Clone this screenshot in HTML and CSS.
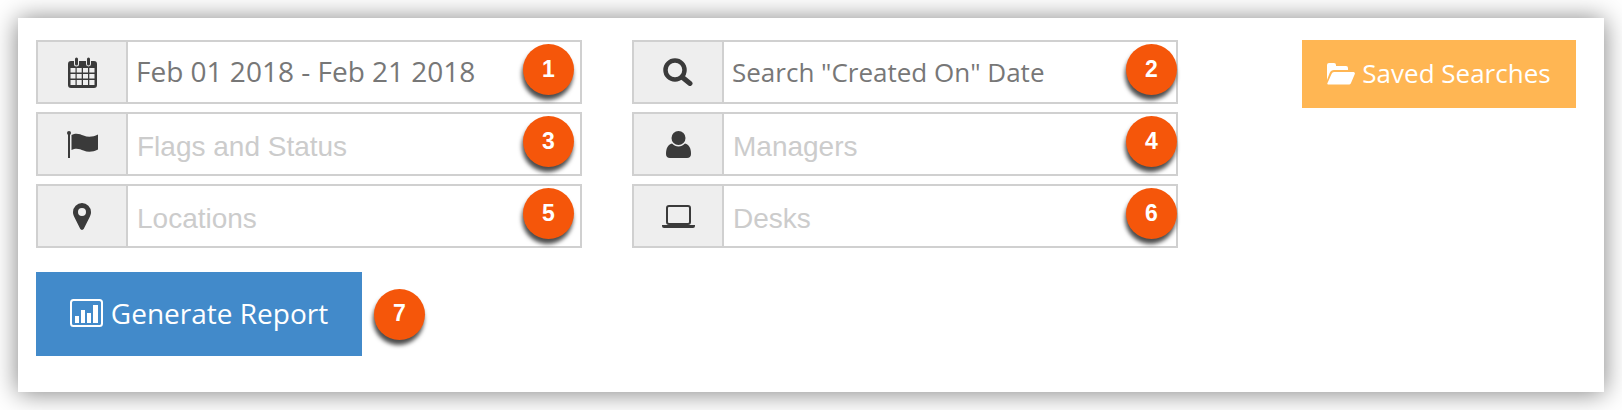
FILE: index.html
```html
<!DOCTYPE html>
<html lang="en">
<head>
<meta charset="utf-8">
<title>Report filters</title>
<link rel="stylesheet" href="styles.css">
</head>
<body>
<main class="card">
  <div class="top">
    <div class="col">
      <div class="field">
        <span class="addon"><svg class="ic" width="29" height="31" viewBox="0 0 29 31"><path fill="#3a3a3a" d="M3 4h3v3a2.5 2.5 0 0 0 5 0V4h7v3a2.5 2.5 0 0 0 5 0V4h3a3 3 0 0 1 3 3v21a3 3 0 0 1-3 3H3a3 3 0 0 1-3-3V7a3 3 0 0 1 3-3z"/><path fill="#3a3a3a" d="M7 2a1.500 1.500 0 0 1 3 0v5a1.500 1.500 0 0 1-3 0zM19 2a1.500 1.500 0 0 1 3 0v5a1.500 1.500 0 0 1-3 0z"/><path fill="#eee" d="M2.500 11h5v4.500h-5zM8.700 11h5v4.500h-5zM15 11h5v4.500h-5zM21.300 11h5.200v4.500h-5.200zM2.500 17h5v4.500h-5zM8.700 17h5v4.500h-5zM15 17h5v4.500h-5zM21.300 17h5.200v4.500h-5.200zM2.500 23h5v5h-5zM8.700 23h5v5h-5zM15 23h5v5h-5zM21.300 23h5.200v5h-5.200z"/></svg></span>
        <span class="value value-date">Feb 01 2018 - Feb 21 2018</span>
        <span class="badge">1</span>
      </div>
      <div class="field">
        <span class="addon"><svg class="ic" width="31" height="27" viewBox="0 0 31 27"><path fill="#3a3a3a" d="M1 3h2v24H1z"/><circle cx="2" cy="2" r="2" fill="#3a3a3a"/><path fill="#3a3a3a" d="M4.500 4C9 1.500 13 3 16.500 4.500 21 6.500 26 6 31 3.500v15c-5 2.500-10 3-14.500 1C13 18 9 16.500 4.500 19z"/></svg></span>
        <span class="placeholder">Flags and Status</span>
        <span class="badge">3</span>
      </div>
      <div class="field">
        <span class="addon"><svg class="ic" width="18" height="27" viewBox="0 0 18 27"><path fill="#3a3a3a" fill-rule="evenodd" d="M9 0a9 9 0 0 1 9 9c0 2-.5 3.300-1.300 5L10.800 25.800a2 2 0 0 1-3.600 0L1.300 14C.5 12.300 0 11 0 9a9 9 0 0 1 9-9zm0 5a4 4 0 1 0 0 8 4 4 0 0 0 0-8z"/></svg></span>
        <span class="placeholder">Locations</span>
        <span class="badge">5</span>
      </div>
    </div>
    <div class="col">
      <div class="field">
        <span class="addon"><svg class="ic" width="30" height="28" viewBox="0 0 30 28"><circle cx="12" cy="12" r="9.500" fill="none" stroke="#3a3a3a" stroke-width="4.500"/><path stroke="#3a3a3a" stroke-width="5" stroke-linecap="round" fill="none" d="M19 19l8 6.500"/></svg></span>
        <span class="value">Search "Created On" Date</span>
        <span class="badge">2</span>
      </div>
      <div class="field">
        <span class="addon"><svg class="ic" width="25" height="27" viewBox="0 0 25 27"><circle cx="12.500" cy="7" r="7" fill="#3a3a3a"/><path fill="#3a3a3a" d="M0 23c0-6 2-9.500 6-10.500 2 2 4 3 6.500 3s4.500-1 6.500-3c4 1 6 4.500 6 10.500 0 2.500-1.500 4-4 4H4c-2.500 0-4-1.500-4-4z"/></svg></span>
        <span class="placeholder">Managers</span>
        <span class="badge">4</span>
      </div>
      <div class="field">
        <span class="addon"><svg class="ic" width="33" height="23" viewBox="0 0 33 23"><rect x="5" y="1" width="23" height="18" rx="2" fill="none" stroke="#3a3a3a" stroke-width="2"/><path fill="#3a3a3a" d="M0 20h33v1a2 2 0 0 1-2 2H2a2 2 0 0 1-2-2z"/></svg></span>
        <span class="placeholder">Desks</span>
        <span class="badge">6</span>
      </div>
    </div>
    <button class="btn btn-saved" type="button"><svg width="28" height="23" viewBox="0 0 28 23"><path fill="#fff" d="M0 3a2 2 0 0 1 2-2h5a2 2 0 0 1 2 2v1h10a2 2 0 0 1 2 2v2H7c-2 0-3.500 1-4.300 3L0 18z"/><path fill="#fff" d="M7 10h19c1.500 0 2.300 1 1.700 2.300L24 21c-.5 1-1.300 1.500-2.500 1.500H1.500C.5 22.500 0 22 .5 21L4.500 12C5 10.700 6 10 7 10z"/></svg>Saved Searches</button>
  </div>
  <div class="bottom">
    <button class="btn btn-report" type="button"><svg width="33" height="28" viewBox="0 0 33 28"><rect x="1" y="1" width="31" height="26" rx="2.500" fill="none" stroke="#fff" stroke-width="2"/><path fill="#fff" d="M5 17h4v7H5zM11 11h4v13h-4zM17 14h4v10h-4zM23 6h5v18h-5z"/></svg>Generate Report</button>
    <span class="badge badge-flow">7</span>
  </div>
</main>
</body>
</html>
```
FILE: styles.css
```css
html, body { margin: 0; padding: 0; background: #fff; }
body { width: 1622px; height: 410px; overflow: hidden; }

.card {
  box-sizing: border-box;
  width: 1586px;
  height: 374px;
  margin: 18px 18px;
  padding: 22px 28px 0 18px;
  background: #fff;
  box-shadow: 0 1px 24px rgba(0, 0, 0, .5);
}

.top { display: flex; align-items: flex-start; gap: 50px; }
.col { display: flex; flex-direction: column; gap: 8px; width: 546px; }

.field {
  position: relative;
  box-sizing: border-box;
  display: flex;
  align-items: center;
  height: 64px;
  border: 2px solid #d0d0d0;
  background: #fff;
}
.addon {
  flex: none;
  align-self: stretch;
  display: flex;
  align-items: center;
  justify-content: center;
  width: 88px;
  background: #eee;
  border-right: 2px solid #d0d0d0;
}
.ic { display: block; }

.value {
  margin-left: 8px;
  font: 26px/1 "Open Sans", sans-serif;
  color: #777;
}
.value-date { font-size: 28px; margin-top: -2px; }
.placeholder {
  margin-left: 9px;
  margin-top: 6px;
  font: 28px/1 "Liberation Sans", Arial, sans-serif;
  color: #ccc;
}

.badge {
  position: absolute;
  top: 2px;
  right: 6px;
  display: flex;
  align-items: center;
  justify-content: center;
  width: 51px;
  height: 51px;
  padding-bottom: 1px;
  box-sizing: border-box;
  border-radius: 50%;
  background: #f5560a;
  color: #fff;
  font: bold 23px/1 "Liberation Sans", Arial, sans-serif;
  box-shadow: -1px 5px 4px rgba(0, 0, 0, .7);
}
.col + .col .badge { right: -1px; }
.badge-flow { position: static; flex: none; margin-left: 12px; }

.btn {
  display: flex;
  align-items: center;
  justify-content: center;
  border: 0;
  padding: 0 0 2px;
  color: #fff;
  font-family: "Open Sans", sans-serif;
  font-weight: 500;
}
.btn-saved {
  flex: none;
  width: 274px;
  height: 68px;
  margin-left: auto;
  gap: 7px;
  background: #ffb653;
  font-size: 26px;
}
.btn-report {
  width: 326px;
  height: 84px;
  gap: 8px;
  background: #428aca;
  font-size: 28px;
}
.bottom { display: flex; align-items: center; margin-top: 24px; }
```
